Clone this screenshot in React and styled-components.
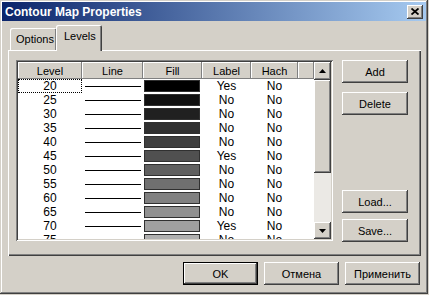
import React from 'react';
import styled, { createGlobalStyle, css } from 'styled-components';

const GlobalStyle = createGlobalStyle`
  html, body {
    margin: 0;
    padding: 0;
    background: #d4d0c8;
  }
  body {
    font-family: "Liberation Sans", Arial, sans-serif;
    font-size: 11px;
    color: #000;
  }
`;

const raised = css`
  background: #d4d0c8;
  box-shadow: inset -1px -1px #404040, inset 1px 1px #ffffff,
    inset -2px -2px #808080, inset 2px 2px #d4d0c8;
`;

const Window = styled.div`
  width: 428px;
  height: 294px;
  box-sizing: border-box;
  padding: 2px;
  background: #d4d0c8;
  box-shadow: inset -1px -1px #404040, inset 1px 1px #d4d0c8,
    inset -2px -2px #808080, inset 2px 2px #ffffff;
  display: flex;
  flex-direction: column;
`;

const TitleBar = styled.div`
  height: 19px;
  display: flex;
  align-items: center;
  justify-content: space-between;
  padding: 0 3px 0 3px;
  background: linear-gradient(to right, #0a246a, #a6caf0);
`;

const Title = styled.span`
  color: #fff;
  font-weight: bold;
  font-size: 12px;
`;

const CloseButton = styled.div`
  ${raised};
  width: 16px;
  height: 14px;
  display: flex;
  align-items: center;
  justify-content: center;
`;

const Body = styled.div`
  padding: 0 6px;
  display: flex;
  flex-direction: column;
`;

const TabRow = styled.div`
  margin-top: 4px;
  height: 25px;
  padding-left: 2px;
  display: flex;
  align-items: flex-end;
  position: relative;
  z-index: 1;
`;

const Tab = styled.div`
  box-sizing: border-box;
  width: ${({ $w }) => $w}px;
  height: ${({ $active }) => ($active ? 26 : 22)}px;
  margin-bottom: ${({ $active }) => ($active ? -1 : 0)}px;
  margin-left: ${({ $active }) => ($active ? -1 : 0)}px;
  padding: ${({ $active }) => ($active ? '5px 0 0 8px' : '5px 0 0 6px')};
  background: #d4d0c8;
  border-radius: 2px 2px 0 0;
  box-shadow: inset 1px 1px #ffffff, inset -1px 0 #404040, inset -2px 0 #808080;
  font-size: 11px;
`;

const Panel = styled.div`
  width: 413px;
  height: 206px;
  box-sizing: border-box;
  padding: 10px 0 0 8px;
  box-shadow: inset 1px 1px #ffffff, inset -1px -1px #404040,
    inset -2px -2px #808080;
  display: flex;
  align-items: flex-start;
`;

const ListBox = styled.div`
  width: 317px;
  height: 181px;
  box-sizing: border-box;
  padding: 2px;
  box-shadow: inset 1px 1px #808080, inset -1px -1px #ffffff,
    inset 2px 2px #404040, inset -2px -2px #d4d0c8;
  display: flex;
  margin-right: 9px;
`;

const Table = styled.div`
  width: 296px;
  height: 177px;
  overflow: hidden;
  background: #fff;
`;

const cols = [64, 61, 59, 49, 47, 16];

const Row = styled.div`
  display: grid;
  grid-template-columns: ${cols.map((c) => c + 'px').join(' ')};
  height: ${({ $h }) => $h}px;
`;

const HeadCell = styled.div`
  ${raised};
  box-shadow: inset -1px -1px #808080, inset 1px 1px #ffffff;
  display: flex;
  align-items: center;
  justify-content: center;
  font-size: 11px;
`;

const Cell = styled.div`
  display: flex;
  align-items: center;
  justify-content: center;
  box-sizing: border-box;
  font-size: 12px;
  ${({ $focus }) =>
    $focus &&
    css`
      outline: 1px dotted #000;
      outline-offset: -1px;
    `}
`;

const LineCell = styled.div`
  display: flex;
  align-items: center;
  padding: 0 2px 0 3px;
`;

const Line = styled.div`
  flex: 1;
  height: 1px;
  background: #000;
`;

const FillCell = styled.div`
  padding: 1px 2px 1px 1px;
  display: flex;
`;

const Swatch = styled.div`
  flex: 1;
  border: 1px solid #303030;
`;

const ScrollBar = styled.div`
  width: 17px;
  height: 177px;
  display: flex;
  flex-direction: column;
  background: #ebe9e5;
`;

const ScrollButton = styled.div`
  ${raised};
  height: ${({ $h }) => $h}px;
  flex: none;
  display: flex;
  align-items: center;
  justify-content: center;
`;

const ButtonCol = styled.div`
  width: 66px;
  height: 182px;
  display: flex;
  flex-direction: column;
  justify-content: space-between;
`;

const ButtonGroup = styled.div`
  display: flex;
  flex-direction: column;
  gap: ${({ $gap }) => $gap}px;
`;

const Button = styled.div`
  ${raised};
  width: ${({ $w }) => $w || 66}px;
  height: 23px;
  box-sizing: border-box;
  display: flex;
  align-items: center;
  justify-content: center;
  font-size: 11px;
  ${({ $default }) =>
    $default &&
    css`
      box-shadow: inset 0 0 0 1px #000, inset -2px -2px #404040,
        inset 2px 2px #ffffff, inset -3px -3px #808080;
    `}
`;

const Footer = styled.div`
  margin-top: 6px;
  display: flex;
  justify-content: flex-end;
  gap: 6px;
`;

const Arrow = ({ down }) => (
  <svg width="7" height="4" viewBox="0 0 7 4">
    <path d={down ? 'M0 0h7L3.5 4z' : 'M3.5 0L7 4H0z'} fill="#000" />
  </svg>
);

const levels = Array.from({ length: 12 }, (_, i) => ({
  level: 20 + i * 5,
  gray: i * 16,
  label: i % 5 === 0 ? 'Yes' : 'No',
  hach: 'No',
}));

const hex = (g) => {
  const h = g.toString(16).padStart(2, '0');
  return `#${h}${h}${h}`;
};

export default function App() {
  return (
    <>
      <GlobalStyle />
      <Window>
        <TitleBar>
          <Title>Contour Map Properties</Title>
          <CloseButton>
            <svg width="8" height="7" viewBox="0 0 8 7">
              <path d="M0.5 0.5L7.5 6.5M7.5 0.5L0.5 6.5" stroke="#000" strokeWidth="1.8" />
            </svg>
          </CloseButton>
        </TitleBar>
        <Body>
          <TabRow>
            <Tab $w={47}>Options</Tab>
            <Tab $w={46} $active>
              Levels
            </Tab>
          </TabRow>
          <Panel>
            <ListBox>
              <Table>
                <Row $h={17}>
                  <HeadCell>Level</HeadCell>
                  <HeadCell>Line</HeadCell>
                  <HeadCell>Fill</HeadCell>
                  <HeadCell>Label</HeadCell>
                  <HeadCell>Hach</HeadCell>
                  <HeadCell />
                </Row>
                {levels.map((r, i) => (
                  <Row $h={14} key={r.level}>
                    <Cell $focus={i === 0}>{r.level}</Cell>
                    <LineCell>
                      <Line />
                    </LineCell>
                    <FillCell>
                      <Swatch style={{ background: hex(r.gray) }} />
                    </FillCell>
                    <Cell>{r.label}</Cell>
                    <Cell>{r.hach}</Cell>
                    <Cell />
                  </Row>
                ))}
              </Table>
              <ScrollBar>
                <ScrollButton $h={18}>
                  <Arrow />
                </ScrollButton>
                <ScrollButton $h={93} />
                <div style={{ flex: 1 }} />
                <ScrollButton $h={17}>
                  <Arrow down />
                </ScrollButton>
              </ScrollBar>
            </ListBox>
            <ButtonCol>
              <ButtonGroup $gap={9}>
                <Button>Add</Button>
                <Button>Delete</Button>
              </ButtonGroup>
              <ButtonGroup $gap={6}>
                <Button>Load...</Button>
                <Button>Save...</Button>
              </ButtonGroup>
            </ButtonCol>
          </Panel>
          <Footer>
            <Button $w={75} $default>
              OK
            </Button>
            <Button $w={75}>Отмена</Button>
            <Button $w={75}>Применить</Button>
          </Footer>
        </Body>
      </Window>
    </>
  );
}
